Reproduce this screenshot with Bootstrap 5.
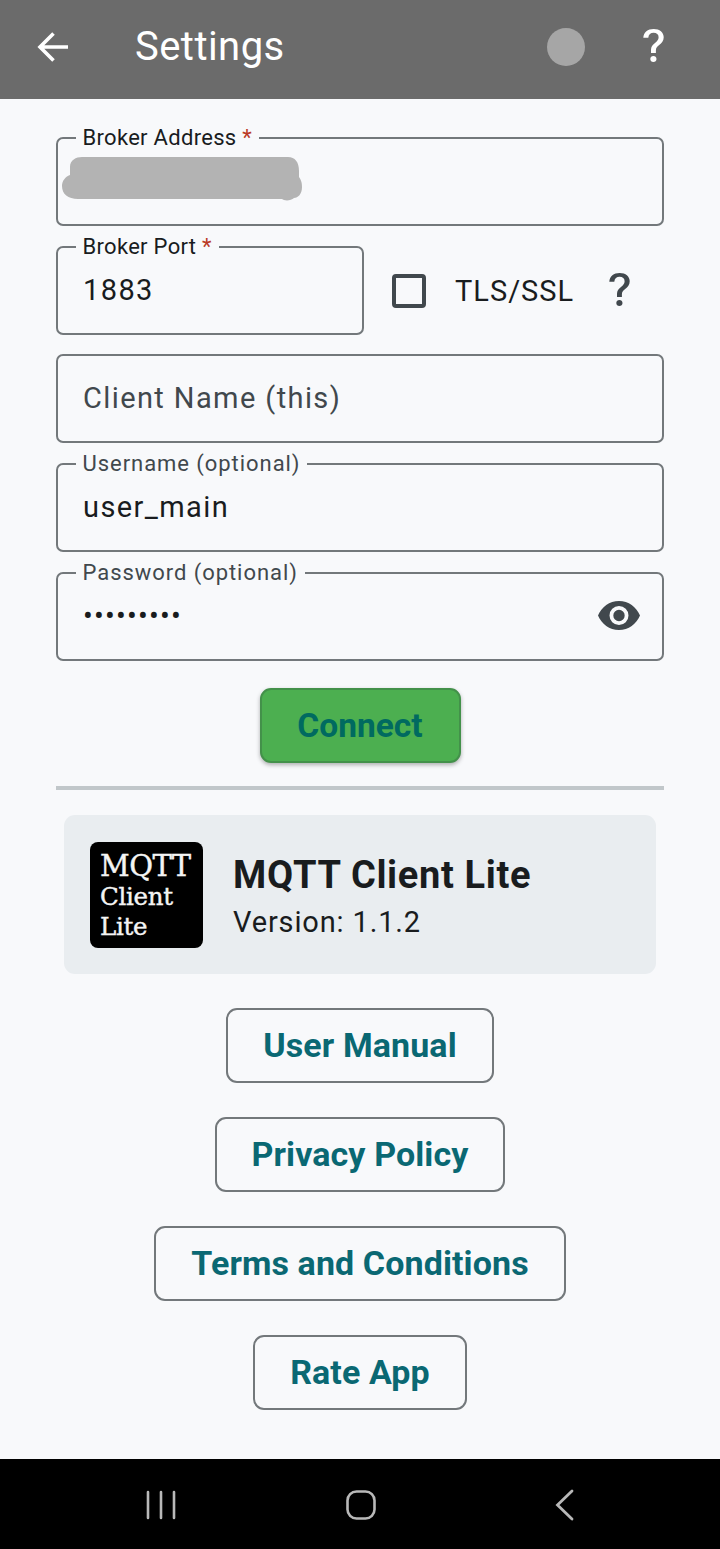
<!DOCTYPE html>
<html lang="en">
<head>
<meta charset="utf-8">
<title>Settings</title>
<link href="https://cdn.jsdelivr.net/npm/bootstrap@5.3.0/dist/css/bootstrap.min.css" rel="stylesheet">
<style>
html,body{height:100%;}
body{font-family:Roboto,"Liberation Sans",sans-serif;background:#f8f9fb;color:#191c1e;}
.screen{width:720px;height:1549px;overflow:hidden;}
.appbar{height:99px;background:#6b6b6b;color:#fff;padding-bottom:5px;}
.back-btn{margin-left:37px;width:32px;}
.appbar-title{font-size:40px;font-weight:400;margin:0 0 0 66px;line-height:44px;letter-spacing:.45px;}
.status-dot{width:38px;height:38px;border-radius:50%;background:#a6a6a6;margin-right:56px;}
.help-top{margin-right:55px;}
.body-area{height:1360px;padding:38px 56px 0;}
.field{position:relative;height:89px;border:2px solid #73787b;border-radius:7px;padding:0 25px;margin-bottom:20px;display:flex;align-items:center;font-size:29px;letter-spacing:1.4px;line-height:36px;}
.field-label{position:absolute;top:-14px;left:17.500px;background:#f8f9fb;padding:0 7px;font-size:22px;line-height:26px;letter-spacing:.3px;white-space:nowrap;}
.label-dark{color:#191c1e;}
.label-muted{color:#41484d;letter-spacing:.95px;}
.req{color:#ba3a26;}
.placeholder-text{color:#41484d;}
.redact{position:absolute;left:4px;top:18px;}
.value-text{position:relative;top:-1px;}
.pw-dots{position:relative;top:-1px;font-size:29px;letter-spacing:1.2px;}
.eye{position:absolute;right:22px;top:27px;}
.port-row{margin-bottom:19px;}
.port-field{width:308px;margin-bottom:0;flex:none;}
.check-box{width:34px;height:34px;border:4px solid #41484d;border-radius:4px;margin-left:28px;flex:none;}
.tls-label{font-size:29px;letter-spacing:1px;margin-left:29px;color:#191c1e;line-height:36px;}
.help-tls{margin-left:33px;}
.connect-wrap{padding-top:27px;}
.connect-btn{width:201px;height:75px;background:#4caf50;border:2px solid #43914a;border-radius:11px;color:#006a60;font-size:33.500px;font-weight:700;line-height:1;padding:0;box-shadow:0 2px 4px rgba(0,0,0,.3);--bs-btn-hover-bg:#4caf50;--bs-btn-hover-color:#006a60;}
.rule{height:4px;background:#c1c7ca;margin:23px 0 0;opacity:1;border:0;}
.about-box{margin:25px 8px 0;height:159px;background:#e9edf0;border-radius:11px;padding-left:26px;}
.logo-tile{width:113px;height:106px;background:#000;border-radius:8px;color:#f4f4f4;font-family:"DejaVu Serif","Liberation Serif",serif;padding:8px 0 0 10px;line-height:1;flex:none;-webkit-text-stroke:.4px #f4f4f4;}
.logo-l1{font-size:29px;letter-spacing:-.5px;line-height:32px;}
.logo-l2{font-size:24.500px;letter-spacing:-.3px;line-height:30px;}
.about-text{margin-left:30px;padding-top:3px;}
.about-name{font-size:38px;font-weight:700;line-height:44px;letter-spacing:.65px;margin:0;}
.about-ver{font-size:29px;line-height:36px;letter-spacing:.85px;margin-top:7px;}
.link-stack{margin-top:34px;gap:34px;}
.link-btn{height:75px;border:2px solid #73787b;border-radius:11px;background:transparent;color:#0a6873;font-size:34px;font-weight:700;line-height:1;padding:0 35px 2px;display:flex;align-items:center;letter-spacing:.1px;--bs-btn-hover-color:#0a6873;}
.sysbar{height:90px;background:#000;padding:2px 0 0 61px;}
.sys-slot{width:200px;}
.sys-slot-last{margin-left:3px;}
</style>
</head>
<body>
<div class="screen d-flex flex-column">
  <header class="appbar d-flex align-items-center">
    <svg class="back-btn" height="32" viewBox="0 0 32 32" fill="none" stroke="#fff" stroke-width="3.6"><path d="M31 16H3M16.500 2.500 3 16l13.500 13.500"/></svg>
    <h1 class="appbar-title">Settings</h1>
    <div class="status-dot ms-auto"></div>
    <svg class="help-top" width="24" height="36" viewBox="0 0 24 36" fill="#fff"><path d="M10 24v-3c0-3.400 1.500-5 4-7 2.200-1.800 3.600-3.300 3.600-5.700 0-2.800-2-4.500-5-4.500-3 0-5 1.700-5.300 5H2.300C2.700 3.300 6.700 0 12.700 0c6 0 10 3.500 10 8.200 0 3.700-2 5.800-4.500 7.800-2.300 1.800-3.300 3-3.300 5.300V24H10zM12.400 27c1.800 0 3.100 1.300 3.100 3s-1.300 3-3.100 3-3.100-1.300-3.100-3 1.300-3 3.100-3z"/></svg>
  </header>

  <main class="body-area flex-grow-1">
    <div class="field">
      <span class="field-label label-dark">Broker Address <span class="req">*</span></span>
      <svg class="redact" width="240" height="44" viewBox="0 0 240 44" fill="#b3b3b3"><path d="M8 10C8 3 14 0 20 0H226C233 0 237 5 237 14V20C240 24 240 28 240 30C240 37 236 41 232 41C229 44 222 44 220 42H16C6 42 0 37 0 29C0 24 3 20 8 18Z"/></svg>
    </div>
    <div class="port-row d-flex align-items-center">
      <div class="field port-field">
        <span class="field-label label-dark">Broker Port <span class="req">*</span></span>
        <span class="value-text">1883</span>
      </div>
      <div class="check-box"></div>
      <span class="tls-label">TLS/SSL</span>
      <svg class="help-tls" width="24" height="36" viewBox="0 0 24 36" fill="#41484d"><path d="M10 24v-3c0-3.400 1.500-5 4-7 2.200-1.800 3.600-3.300 3.600-5.700 0-2.800-2-4.500-5-4.500-3 0-5 1.700-5.300 5H2.300C2.700 3.300 6.700 0 12.700 0c6 0 10 3.500 10 8.200 0 3.700-2 5.800-4.500 7.800-2.300 1.800-3.300 3-3.300 5.300V24H10zM12.400 27c1.800 0 3.100 1.300 3.100 3s-1.300 3-3.100 3-3.100-1.300-3.100-3 1.300-3 3.100-3z"/></svg>
    </div>
    <div class="field">
      <span class="placeholder-text value-text">Client Name (this)</span>
    </div>
    <div class="field">
      <span class="field-label label-muted">Username (optional)</span>
      <span class="value-text">user_main</span>
    </div>
    <div class="field mb-0">
      <span class="field-label label-muted">Password (optional)</span>
      <span class="pw-dots">•••••••••</span>
      <svg class="eye" width="42" height="29" viewBox="0 0 42 29"><path fill="#41484d" fill-rule="evenodd" d="M21 0C11.500 0 3.500 6 0 14.500 3.500 23 11.500 29 21 29s17.500-6 21-14.500C38.500 6 30.500 0 21 0zm0 24a9.500 9.500 0 1 1 0-19 9.500 9.500 0 0 1 0 19zm0-15.200a5.700 5.700 0 1 0 0 11.400 5.700 5.700 0 0 0 0-11.400z"/></svg>
    </div>
    <div class="connect-wrap text-center">
      <button type="button" class="btn connect-btn">Connect</button>
    </div>
    <hr class="rule">
    <section class="about-box d-flex align-items-center">
      <div class="logo-tile">
        <div class="logo-l1">MQTT</div>
        <div class="logo-l2">Client</div>
        <div class="logo-l2">Lite</div>
      </div>
      <div class="about-text">
        <h2 class="about-name">MQTT Client Lite</h2>
        <div class="about-ver">Version: 1.1.2</div>
      </div>
    </section>
    <nav class="link-stack d-flex flex-column align-items-center">
      <button type="button" class="btn link-btn">User Manual</button>
      <button type="button" class="btn link-btn">Privacy Policy</button>
      <button type="button" class="btn link-btn">Terms and Conditions</button>
      <button type="button" class="btn link-btn">Rate App</button>
    </nav>
  </main>

  <footer class="sysbar d-flex align-items-center flex-shrink-0">
    <div class="sys-slot d-flex justify-content-center">
      <svg width="30" height="30" viewBox="0 0 30 30" stroke="#b8b8b8" stroke-width="2.600" stroke-linecap="round"><path d="M2 2v26M15 2v26M28 2v26"/></svg>
    </div>
    <div class="sys-slot d-flex justify-content-center">
      <svg width="30" height="30" viewBox="0 0 30 30" fill="none" stroke="#b8b8b8" stroke-width="2.600"><rect x="1.500" y="1.500" width="27" height="27" rx="9"/></svg>
    </div>
    <div class="sys-slot sys-slot-last d-flex justify-content-center">
      <svg width="20" height="32" viewBox="0 0 20 32" fill="none" stroke="#b8b8b8" stroke-width="2.800" stroke-linecap="round"><path d="M18 2 3.500 16 18 30"/></svg>
    </div>
  </footer>
</div>
<script src="https://cdn.jsdelivr.net/npm/bootstrap@5.3.0/dist/js/bootstrap.bundle.min.js"></script>
</body>
</html>
